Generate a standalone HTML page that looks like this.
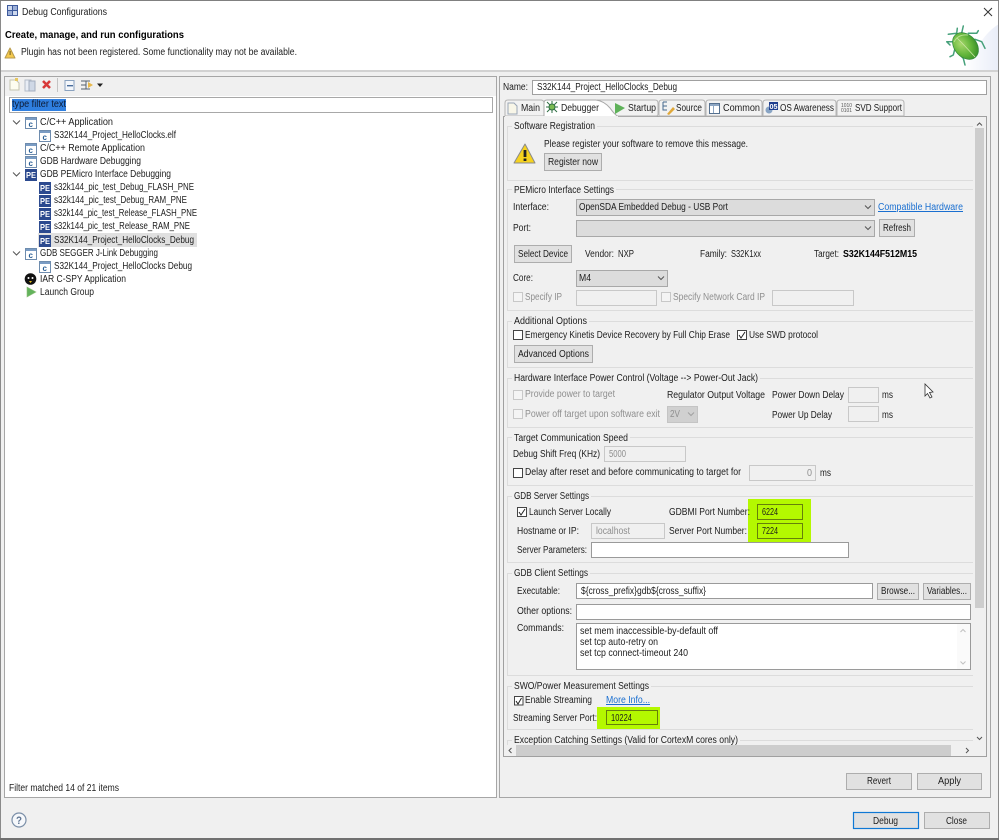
<!DOCTYPE html>
<html><head><meta charset="utf-8"><title>Debug Configurations</title>
<style>
html,body{margin:0;padding:0;background:#f0f0f0;width:999px;height:840px;overflow:hidden}
svg{display:block;filter:blur(.3px)}
text{font-family:"Liberation Sans",sans-serif;font-size:10px;fill:#1c1c1c;white-space:pre;transform:translateY(-1px)}
.g text,text.g{fill:#8f8f8f}
.b{fill:#e1e1e1;stroke:#adadad}
.c{fill:#dcdcdc;stroke:#a8a8a8}
.i{fill:#f0f0f0;stroke:#c8c8c8}
.w{fill:#fff;stroke:#9a9a9a}
.l{fill:none;stroke:#dcdcdc}
.k{fill:#fff;stroke:#444}
.kd{fill:#f4f4f4;stroke:#c8c8c8}
.y{fill:#b4f800;stroke:none}
.yi{fill:#b4f800;stroke:#66800a}
.a{fill:none;stroke:#555;stroke-width:1}
text.u{fill:#1a6fd0;text-decoration:underline}
</style></head><body>
<svg width="999" height="840" viewBox="0 0 999 840" xmlns="http://www.w3.org/2000/svg" style="shape-rendering:auto">
<defs>
<linearGradient id="hd" x1="0" y1="0" x2="1" y2="0"><stop offset="0" stop-color="#fff"/><stop offset="1" stop-color="#e9edf8"/></linearGradient>
<radialGradient id="bug" cx="0.4" cy="0.35" r="0.75"><stop offset="0" stop-color="#a8d86c"/><stop offset="0.55" stop-color="#62b53a"/><stop offset="1" stop-color="#2f8426"/></radialGradient>
<clipPath id="cl"><rect x="505" y="117" width="470" height="628"/></clipPath>
</defs>

<!-- window -->
<rect x="0" y="0" width="999" height="840" fill="#f0f0f0"/>
<rect x="1" y="1" width="997" height="69" fill="#fff"/>
<path d="M999 24 C985 32 975 50 964 70 L999 70Z" fill="url(#hd)"/>
<rect x="1" y="70" width="997" height="2" fill="#d2d2d2"/>
<path d="M0.5 0V838M998.5 0V838" stroke="#8a8a8a" fill="none"/>
<rect x="0" y="0" width="999" height="1" fill="#808080"/>
<rect x="0" y="838" width="999" height="2" fill="#707070"/>

<!-- title bar -->
<rect x="7" y="5" width="11" height="11" fill="#3d5a9c"/>
<rect x="8" y="6" width="4" height="4" fill="#cdd8ee"/><rect x="13" y="6" width="4" height="4" fill="#9db0d8"/><rect x="8" y="11" width="4" height="4" fill="#9db0d8"/><rect x="13" y="11" width="4" height="4" fill="#cdd8ee"/>
<text x="22" y="16" textLength="85" lengthAdjust="spacingAndGlyphs">Debug Configurations</text>
<path d="M984 8L992 16M992 8L984 16" stroke="#333" stroke-width="1" fill="none"/>

<text x="5" y="39" textLength="179" lengthAdjust="spacingAndGlyphs" style="font-weight:bold;font-size:10.5px;fill:#000">Create, manage, and run configurations</text>
<path d="M10 48L15 58H5Z" fill="#f4c94e" stroke="#b79a4c" stroke-linejoin="round"/><rect x="9.6" y="51" width="1" height="4" fill="#6b5a20"/>
<text x="21" y="56" textLength="276" lengthAdjust="spacingAndGlyphs">Plugin has not been registered. Some functionality may not be available.</text>

<!-- bug logo -->
<g fill="none" stroke="#45a07a" stroke-width="1.5" stroke-linejoin="round" stroke-linecap="round">
<path d="M948.300 34.300L956.700 33.300L957.300 28.300"/><path d="M961.700 33L963.300 26"/><path d="M968.300 33.300L976.700 33.300L978.300 30.700"/><path d="M975 39.300L981.700 41.700L985 48.300"/>
<path d="M955 41.700L946.700 41.700L950 45"/><path d="M955 48.300L953.300 55L950 56.700"/><path d="M960 55L963.300 58.300L965 65"/>
</g>
<g transform="rotate(-42 965.500 46)"><ellipse cx="965.500" cy="46" rx="11" ry="15" fill="url(#bug)" stroke="#2f8a3c" stroke-width=".7"/></g>
<path d="M957 38Q965 46 975 57" stroke="#cfe8a8" stroke-width=".8" fill="none"/>
<path d="M954 42Q958 34 968 35" stroke="#b8e090" stroke-width="1" fill="none"/>

<!-- left panel -->
<rect x="4.5" y="76.5" width="492" height="721" fill="#fff" stroke="#a6a6a6"/>
<rect x="5" y="77" width="491" height="19" fill="#f0f0f0"/>
<path d="M10 80H16L19 83V90H10Z" fill="#fdfdf0" stroke="#c4c4b0"/><rect x="15" y="78" width="3" height="3" fill="#e8c860"/>
<path d="M25 80H31V91H25Z" fill="#e8edf5" stroke="#b5bdc9"/><path d="M29 81H35V91H29Z" fill="#cfd8e6" stroke="#a3aebf"/>
<path d="M43 81L50 88M50 81L43 88" stroke="#d83a3a" stroke-width="2.6" fill="none"/>
<rect x="57" y="78" width="1" height="14" fill="#c4c4c4"/>
<rect x="65" y="80.5" width="9" height="10" fill="#f4f7fb" stroke="#8aa2bf"/><rect x="67" y="85" width="6" height="1.4" fill="#4a6d9c"/>
<path d="M81 81H90M81 85H86M81 89H90M86 81V89" stroke="#55606e" fill="none"/><path d="M88 82L93 85L88 88Z" fill="#e7b84a"/>
<path d="M97 83.5H103L100 87Z" fill="#222"/>
<rect x="9.5" y="97.5" width="483" height="15" fill="#fff" stroke="#a8a8a8"/>
<rect x="12" y="99" width="54" height="12" fill="#2f7fe0"/>
<text x="12" y="108" textLength="54" lengthAdjust="spacingAndGlyphs" style="fill:#0d1a33">type filter text</text>

<!-- tree -->
<rect x="38" y="233" width="159" height="14" fill="#e0e0e0"/>
<g fill="none" stroke="#555"><path d="M13 120.5L16.5 124L20 120.5"/><path d="M13 172.5L16.5 176L20 172.5"/><path d="M13 251.5L16.5 255L20 251.5"/></g>

<g><rect x="25.5" y="117.5" width="11" height="11" fill="#fff" stroke="#6e8cae"/><rect x="26" y="118" width="10" height="2" fill="#7a9cc4"/><text x="28.5" y="128" style="font-size:8px;fill:#2a5f96;font-weight:bold">c</text></g>
<g><rect x="39.5" y="130.5" width="11" height="11" fill="#fff" stroke="#6e8cae"/><rect x="40" y="131" width="10" height="2" fill="#7a9cc4"/><text x="42.5" y="141" style="font-size:8px;fill:#2a5f96;font-weight:bold">c</text></g>
<g><rect x="25.5" y="143.5" width="11" height="11" fill="#fff" stroke="#6e8cae"/><rect x="26" y="144" width="10" height="2" fill="#7a9cc4"/><text x="28.5" y="154" style="font-size:8px;fill:#2a5f96;font-weight:bold">c</text></g>
<g><rect x="25.5" y="156.5" width="11" height="11" fill="#fff" stroke="#6e8cae"/><rect x="26" y="157" width="10" height="2" fill="#7a9cc4"/><text x="28.5" y="167" style="font-size:8px;fill:#2a5f96;font-weight:bold">c</text></g>
<g><rect x="25.5" y="248.5" width="11" height="11" fill="#fff" stroke="#6e8cae"/><rect x="26" y="249" width="10" height="2" fill="#7a9cc4"/><text x="28.5" y="259" style="font-size:8px;fill:#2a5f96;font-weight:bold">c</text></g>
<g><rect x="39.5" y="261.5" width="11" height="11" fill="#fff" stroke="#6e8cae"/><rect x="40" y="262" width="10" height="2" fill="#7a9cc4"/><text x="42.5" y="272" style="font-size:8px;fill:#2a5f96;font-weight:bold">c</text></g>

<g style="font-weight:bold">
<rect x="25" y="169" width="12" height="12" fill="#2c4a8f"/><text x="26" y="179" textLength="10" lengthAdjust="spacingAndGlyphs" style="font-size:8.5px;fill:#fff;font-weight:bold">PE</text>
<rect x="39" y="182" width="12" height="12" fill="#2c4a8f"/><text x="40" y="192" textLength="10" lengthAdjust="spacingAndGlyphs" style="font-size:8.5px;fill:#fff;font-weight:bold">PE</text>
<rect x="39" y="195" width="12" height="12" fill="#2c4a8f"/><text x="40" y="205" textLength="10" lengthAdjust="spacingAndGlyphs" style="font-size:8.5px;fill:#fff;font-weight:bold">PE</text>
<rect x="39" y="208" width="12" height="12" fill="#2c4a8f"/><text x="40" y="218" textLength="10" lengthAdjust="spacingAndGlyphs" style="font-size:8.5px;fill:#fff;font-weight:bold">PE</text>
<rect x="39" y="221" width="12" height="12" fill="#2c4a8f"/><text x="40" y="231" textLength="10" lengthAdjust="spacingAndGlyphs" style="font-size:8.5px;fill:#fff;font-weight:bold">PE</text>
<rect x="39" y="235" width="12" height="12" fill="#2c4a8f"/><text x="40" y="245" textLength="10" lengthAdjust="spacingAndGlyphs" style="font-size:8.5px;fill:#fff;font-weight:bold">PE</text>
</g>
<circle cx="30.5" cy="279" r="5.8" fill="#111"/><circle cx="28.5" cy="278" r="1" fill="#fff"/><circle cx="32.5" cy="278" r="1" fill="#fff"/><path d="M29 281H32L30.5 283Z" fill="#e8c020"/>
<path d="M27 287L36 292L27 297Z" fill="#63b35c" stroke="#8fbf7a" stroke-width=".6"/>

<text x="40" y="126" textLength="73" lengthAdjust="spacingAndGlyphs">C/C++ Application</text>
<text x="54" y="139" textLength="122" lengthAdjust="spacingAndGlyphs">S32K144_Project_HelloClocks.elf</text>
<text x="40" y="152" textLength="105" lengthAdjust="spacingAndGlyphs">C/C++ Remote Application</text>
<text x="40" y="165" textLength="101" lengthAdjust="spacingAndGlyphs">GDB Hardware Debugging</text>
<text x="40" y="178" textLength="131" lengthAdjust="spacingAndGlyphs">GDB PEMicro Interface Debugging</text>
<text x="54" y="191" textLength="140" lengthAdjust="spacingAndGlyphs">s32k144_pic_test_Debug_FLASH_PNE</text>
<text x="54" y="204" textLength="133" lengthAdjust="spacingAndGlyphs">s32k144_pic_test_Debug_RAM_PNE</text>
<text x="54" y="217" textLength="143" lengthAdjust="spacingAndGlyphs">s32k144_pic_test_Release_FLASH_PNE</text>
<text x="54" y="230" textLength="136" lengthAdjust="spacingAndGlyphs">s32k144_pic_test_Release_RAM_PNE</text>
<text x="54" y="244" textLength="140" lengthAdjust="spacingAndGlyphs">S32K144_Project_HelloClocks_Debug</text>
<text x="40" y="257" textLength="118" lengthAdjust="spacingAndGlyphs">GDB SEGGER J-Link Debugging</text>
<text x="54" y="270" textLength="138" lengthAdjust="spacingAndGlyphs">S32K144_Project_HelloClocks Debug</text>
<text x="40" y="283" textLength="86" lengthAdjust="spacingAndGlyphs">IAR C-SPY Application</text>
<text x="40" y="296" textLength="54" lengthAdjust="spacingAndGlyphs">Launch Group</text>
<text x="9" y="792" textLength="110" lengthAdjust="spacingAndGlyphs">Filter matched 14 of 21 items</text>

<!-- right panel -->
<rect x="499.5" y="76.5" width="491" height="721" fill="#f0f0f0" stroke="#a6a6a6"/>
<text x="503" y="91" textLength="25" lengthAdjust="spacingAndGlyphs">Name:</text>
<rect x="532.5" y="80.5" width="454" height="14" fill="#fff" stroke="#a0a0a0"/>
<text x="537" y="91" textLength="140" lengthAdjust="spacingAndGlyphs">S32K144_Project_HelloClocks_Debug</text>

<!-- tabs -->
<rect x="503.5" y="116.5" width="483" height="640" fill="#f0f0f0" stroke="#a0a0a0"/>
<path d="M505 116V103Q505 100 508 100H541Q543 100 544 102V116ZM616 116H656Q658 116 658 114V103Q658 100 655 100H597Q608 104 616 116ZM659 116V103Q659 100 662 100H702Q705 100 705 103V116ZM706 116V103Q706 100 709 100H759Q762 100 762 103V116ZM763 116V103Q763 100 766 100H833Q836 100 836 103V116ZM837 116V103Q837 100 840 100H901Q904 100 904 103V116Z" fill="#f2f2f2" stroke="#b4b4b4"/>
<path d="M503.5 116.5H544V103Q544 100 547 100H596Q604 101 610 108Q614 114 618 116.5" fill="#fff" stroke="#a8a8a8"/>
<rect x="505" y="116" width="113" height="2" fill="#f0f0f0"/>
<path d="M508 103H514L517 106V114H508Z" fill="#f8f6e8" stroke="#9aa6b6"/>
<path d="M547 102L557 112M557 102L547 112M546 107H558M552 101V113" stroke="#2f6f44" fill="none"/><circle cx="552" cy="107" r="3" fill="#7cbc52" stroke="#2f6f44"/>
<path d="M615 103L625 108L615 114Z" fill="#5fb25a"/>
<path d="M663 102V110H667M663 106H667M663 102H667" stroke="#47698f" fill="none"/><path d="M667 114L673 107L675 109L669 115Z" fill="#e0a83a"/>
<rect x="709.5" y="103.5" width="10" height="10" fill="#fff" stroke="#55708f"/><rect x="710" y="104" width="9" height="2" fill="#8ea7c4"/><path d="M713.5 106V113" stroke="#8ea7c4"/>
<circle cx="769" cy="110" r="3.500" fill="#88a4c4"/><rect x="769" y="102" width="9" height="8" fill="#1f3f8f"/><text x="769.500" y="110" textLength="8" lengthAdjust="spacingAndGlyphs" style="font-size:7px;fill:#fff;font-weight:bold">05</text>
<text x="841" y="108" textLength="11" lengthAdjust="spacingAndGlyphs" style="font-size:5px;fill:#555">1010</text><text x="841" y="113" textLength="11" lengthAdjust="spacingAndGlyphs" style="font-size:5px;fill:#555">0101</text>
<text x="521" y="112" textLength="19" lengthAdjust="spacingAndGlyphs">Main</text>
<text x="561" y="112" textLength="38" lengthAdjust="spacingAndGlyphs">Debugger</text>
<text x="628" y="112" textLength="28" lengthAdjust="spacingAndGlyphs">Startup</text>
<text x="676" y="112" textLength="26" lengthAdjust="spacingAndGlyphs">Source</text>
<text x="723" y="112" textLength="37" lengthAdjust="spacingAndGlyphs">Common</text>
<text x="780" y="112" textLength="54" lengthAdjust="spacingAndGlyphs">OS Awareness</text>
<text x="855" y="112" textLength="47" lengthAdjust="spacingAndGlyphs">SVD Support</text>

<!-- scrollable content -->
<g clip-path="url(#cl)">
<!-- group boxes -->
<path class="l" d="M973 126.5H507.5V180.5H973M973 189.5H507.5V310.5H973M973 321.5H507.5V367.5H973M973 378.5H507.5V427.5H973M973 437.5H507.5V485.5H973M973 496.5H507.5V562.5H973M973 573.5H507.5V675.5H973M973 686.5H507.5V729.5H973M973 740.5H507.5V760"/>
<rect x="512" y="121" width="85" height="9" fill="#f0f0f0"/><rect x="512" y="184" width="104" height="9" fill="#f0f0f0"/><rect x="512" y="316" width="77" height="9" fill="#f0f0f0"/><rect x="512" y="373" width="248" height="9" fill="#f0f0f0"/><rect x="512" y="432" width="118" height="9" fill="#f0f0f0"/><rect x="512" y="491" width="79" height="9" fill="#f0f0f0"/><rect x="512" y="568" width="78" height="9" fill="#f0f0f0"/><rect x="512" y="681" width="139" height="9" fill="#f0f0f0"/><rect x="512" y="735" width="228" height="9" fill="#f0f0f0"/>

<text x="514" y="130" textLength="81" lengthAdjust="spacingAndGlyphs">Software Registration</text>
<path d="M525 144L535 163H514Z" fill="#f6d21e" stroke="#8a8a8a" stroke-linejoin="round"/><rect x="523.6" y="150" width="2.8" height="7" fill="#222"/><rect x="523.6" y="158.5" width="2.8" height="2.5" fill="#222"/>
<text x="544" y="148" textLength="204" lengthAdjust="spacingAndGlyphs">Please register your software to remove this message.</text>
<rect class="b" x="544.5" y="153.5" width="57" height="17"/>
<text x="548" y="166" textLength="50" lengthAdjust="spacingAndGlyphs">Register now</text>

<text x="514" y="194" textLength="100" lengthAdjust="spacingAndGlyphs">PEMicro Interface Settings</text>
<text x="513" y="211" textLength="36" lengthAdjust="spacingAndGlyphs">Interface:</text>
<rect class="c" x="576.5" y="199.5" width="298" height="16"/>
<text x="579" y="211" textLength="149" lengthAdjust="spacingAndGlyphs">OpenSDA Embedded Debug - USB Port</text>
<path class="a" d="M865 205.5L868 208.5L871 205.5"/>
<text class="u" x="878" y="211" textLength="85" lengthAdjust="spacingAndGlyphs">Compatible Hardware</text>
<text x="513" y="232" textLength="18" lengthAdjust="spacingAndGlyphs">Port:</text>
<rect class="c" x="576.5" y="220.5" width="298" height="16"/>
<path class="a" d="M865 226.5L868 229.5L871 226.5"/>
<rect class="b" x="879.5" y="219.5" width="35" height="17"/>
<text x="883" y="232" textLength="28" lengthAdjust="spacingAndGlyphs">Refresh</text>
<rect class="b" x="514.5" y="245.5" width="57" height="17"/>
<text x="518" y="258" textLength="50" lengthAdjust="spacingAndGlyphs">Select Device</text>
<text x="585" y="258" textLength="29" lengthAdjust="spacingAndGlyphs">Vendor:</text>
<text x="618" y="258" textLength="16" lengthAdjust="spacingAndGlyphs">NXP</text>
<text x="700" y="258" textLength="27" lengthAdjust="spacingAndGlyphs">Family:</text>
<text x="731" y="258" textLength="30" lengthAdjust="spacingAndGlyphs">S32K1xx</text>
<text x="814" y="258" textLength="25" lengthAdjust="spacingAndGlyphs">Target:</text>
<text x="843" y="258" textLength="74" lengthAdjust="spacingAndGlyphs" style="font-weight:bold;fill:#000">S32K144F512M15</text>
<text x="513" y="282" textLength="20" lengthAdjust="spacingAndGlyphs">Core:</text>
<rect class="c" x="576.5" y="270.5" width="91" height="16"/>
<text x="579" y="282" textLength="12" lengthAdjust="spacingAndGlyphs">M4</text>
<path class="a" d="M658 276.5L661 279.5L664 276.5"/>
<rect class="kd" x="513.5" y="292.5" width="9" height="9"/>
<text class="g" x="525" y="301" textLength="37" lengthAdjust="spacingAndGlyphs">Specify IP</text>
<rect class="i" x="576.5" y="290.5" width="80" height="15"/>
<rect class="kd" x="661.5" y="292.5" width="9" height="9"/>
<text class="g" x="673" y="301" textLength="92" lengthAdjust="spacingAndGlyphs">Specify Network Card IP</text>
<rect class="i" x="772.5" y="290.5" width="81" height="15"/>

<text x="514" y="325" textLength="73" lengthAdjust="spacingAndGlyphs">Additional Options</text>
<rect class="k" x="513.5" y="330.5" width="9" height="9"/>
<text x="525" y="339" textLength="205" lengthAdjust="spacingAndGlyphs">Emergency Kinetis Device Recovery by Full Chip Erase</text>
<rect class="k" x="737.5" y="330.5" width="9" height="9"/><path d="M739 335L741 338L745 332" stroke="#222" fill="none"/>
<text x="749" y="339" textLength="69" lengthAdjust="spacingAndGlyphs">Use SWD protocol</text>
<rect class="b" x="514.5" y="345.5" width="78" height="17"/>
<text x="518" y="358" textLength="71" lengthAdjust="spacingAndGlyphs">Advanced Options</text>

<text x="514" y="382" textLength="244" lengthAdjust="spacingAndGlyphs">Hardware Interface Power Control (Voltage --&gt; Power-Out Jack)</text>
<rect class="kd" x="513.5" y="390.5" width="9" height="9"/>
<text class="g" x="525" y="398" textLength="90" lengthAdjust="spacingAndGlyphs">Provide power to target</text>
<text x="667" y="399" textLength="98" lengthAdjust="spacingAndGlyphs">Regulator Output Voltage</text>
<text x="772" y="399" textLength="72" lengthAdjust="spacingAndGlyphs">Power Down Delay</text>
<rect class="i" x="848.5" y="387.5" width="30" height="15"/>
<text x="882" y="399" textLength="11" lengthAdjust="spacingAndGlyphs">ms</text>
<rect class="kd" x="513.5" y="409.5" width="9" height="9"/>
<text class="g" x="525" y="418" textLength="135" lengthAdjust="spacingAndGlyphs">Power off target upon software exit</text>
<rect x="667.5" y="406.5" width="30" height="16" fill="#d0d0d0" stroke="#c4c4c4"/>
<text class="g" x="670" y="418" textLength="10" lengthAdjust="spacingAndGlyphs">2V</text>
<path d="M688 412.5L691 415.5L694 412.5" fill="none" stroke="#a0a0a0"/>
<text x="772" y="419" textLength="60" lengthAdjust="spacingAndGlyphs">Power Up Delay</text>
<rect class="i" x="848.5" y="406.5" width="30" height="15"/>
<text x="882" y="419" textLength="11" lengthAdjust="spacingAndGlyphs">ms</text>
<path d="M925 384V396L927.500 393.500L930 398L932 397L929.500 392.500L933 392Z" fill="#fff" stroke="#333" stroke-width=".8"/>

<text x="514" y="442" textLength="114" lengthAdjust="spacingAndGlyphs">Target Communication Speed</text>
<text x="513" y="458" textLength="87" lengthAdjust="spacingAndGlyphs">Debug Shift Freq (KHz)</text>
<rect class="i" x="604.5" y="446.5" width="81" height="15"/>
<text class="g" x="609" y="458" textLength="17" lengthAdjust="spacingAndGlyphs">5000</text>
<rect class="k" x="513.5" y="468.500" width="9" height="9"/>
<text x="525" y="476" textLength="216" lengthAdjust="spacingAndGlyphs">Delay after reset and before communicating to target for</text>
<rect class="i" x="749.5" y="465.5" width="66" height="15"/>
<text class="g" x="807" y="477" textLength="5" lengthAdjust="spacingAndGlyphs">0</text>
<text x="820" y="477" textLength="11" lengthAdjust="spacingAndGlyphs">ms</text>

<text x="514" y="500" textLength="75" lengthAdjust="spacingAndGlyphs">GDB Server Settings</text>
<rect class="y" x="748" y="499" width="63" height="44"/>
<rect class="k" x="517.5" y="507.5" width="9" height="9"/><path d="M519 512L521 515L525 509" stroke="#222" fill="none"/>
<text x="529" y="516" textLength="82" lengthAdjust="spacingAndGlyphs">Launch Server Locally</text>
<text x="669" y="516" textLength="81" lengthAdjust="spacingAndGlyphs">GDBMI Port Number:</text>
<rect class="yi" x="757.5" y="504.5" width="45" height="15"/>
<text x="762" y="516" textLength="16" lengthAdjust="spacingAndGlyphs">6224</text>
<text x="517" y="535" textLength="62" lengthAdjust="spacingAndGlyphs">Hostname or IP:</text>
<rect class="i" x="591.5" y="523.5" width="73" height="15"/>
<text class="g" x="596" y="535" textLength="34" lengthAdjust="spacingAndGlyphs">localhost</text>
<text x="669" y="535" textLength="78" lengthAdjust="spacingAndGlyphs">Server Port Number:</text>
<rect class="yi" x="757.5" y="523.5" width="45" height="15"/>
<text x="762" y="535" textLength="16" lengthAdjust="spacingAndGlyphs">7224</text>
<text x="517" y="554" textLength="70" lengthAdjust="spacingAndGlyphs">Server Parameters:</text>
<rect class="w" x="591.5" y="542.5" width="257" height="15"/>

<text x="514" y="577" textLength="74" lengthAdjust="spacingAndGlyphs">GDB Client Settings</text>
<text x="517" y="595" textLength="43" lengthAdjust="spacingAndGlyphs">Executable:</text>
<rect class="w" x="576.5" y="583.5" width="296" height="15"/>
<text x="581" y="595" textLength="125" lengthAdjust="spacingAndGlyphs">${cross_prefix}gdb${cross_suffix}</text>
<rect class="b" x="877.5" y="583.5" width="41" height="16"/>
<text x="881" y="595" textLength="34" lengthAdjust="spacingAndGlyphs">Browse...</text>
<rect class="b" x="923.5" y="583.5" width="47" height="16"/>
<text x="927" y="595" textLength="40" lengthAdjust="spacingAndGlyphs">Variables...</text>
<text x="517" y="615" textLength="55" lengthAdjust="spacingAndGlyphs">Other options:</text>
<rect class="w" x="576.5" y="604.5" width="394" height="15"/>
<text x="517" y="632" textLength="47" lengthAdjust="spacingAndGlyphs">Commands:</text>
<rect class="w" x="576.5" y="623.5" width="394" height="46"/>
<rect x="957" y="624" width="13" height="45" fill="#fafafa"/>
<path d="M960.500 632L963 629.500L965.500 632M960.500 661.500L963 664L965.500 661.500" fill="none" stroke="#c0c0c0"/>
<text x="580" y="635" textLength="138" lengthAdjust="spacingAndGlyphs">set mem inaccessible-by-default off</text>
<text x="580" y="646" textLength="78" lengthAdjust="spacingAndGlyphs">set tcp auto-retry on</text>
<text x="580" y="657" textLength="108" lengthAdjust="spacingAndGlyphs">set tcp connect-timeout 240</text>

<text x="514" y="690" textLength="135" lengthAdjust="spacingAndGlyphs">SWO/Power Measurement Settings</text>
<rect class="k" x="514.5" y="696.5" width="8.500" height="8.500"/><path d="M516 701L518 704L521.500 698" stroke="#222" fill="none"/>
<text x="525" y="704" textLength="67" lengthAdjust="spacingAndGlyphs">Enable Streaming</text>
<text class="u" x="606" y="704" textLength="44" lengthAdjust="spacingAndGlyphs">More Info...</text>
<text x="513" y="722" textLength="84" lengthAdjust="spacingAndGlyphs">Streaming Server Port:</text>
<rect class="y" x="597" y="707" width="63" height="22"/>
<rect class="yi" x="606.5" y="710.5" width="51" height="14"/>
<text x="611" y="722" textLength="21" lengthAdjust="spacingAndGlyphs">10224</text>
<text x="514" y="744" textLength="224" lengthAdjust="spacingAndGlyphs">Exception Catching Settings (Valid for CortexM cores only)</text>
</g>

<!-- scrollbars -->
<rect x="975" y="117" width="11" height="628" fill="#f0f0f0"/>
<rect x="975" y="128" width="9" height="480" fill="#cdcdcd"/>
<path d="M977 125.500L979.500 123L982 125.500M977 737L979.500 739.500L982 737" fill="none" stroke="#555"/>
<rect x="504" y="745" width="482" height="11" fill="#f0f0f0"/>
<rect x="516" y="745" width="435" height="11" fill="#cdcdcd"/>
<path d="M511.500 748L509 750.500L511.500 753M966 748L968.500 750.500L966 753" fill="none" stroke="#555"/>

<!-- bottom buttons -->
<rect class="b" x="846.5" y="773.5" width="65" height="16"/>
<text x="867" y="785" textLength="24" lengthAdjust="spacingAndGlyphs">Revert</text>
<rect class="b" x="917.5" y="773.5" width="64" height="16"/>
<text x="938" y="785" textLength="23" lengthAdjust="spacingAndGlyphs">Apply</text>
<rect x="853.500" y="812.500" width="65" height="16" fill="#e1e1e1" stroke="#0f78d4" stroke-width="1.2"/>
<text x="873" y="825" textLength="25" lengthAdjust="spacingAndGlyphs">Debug</text>
<rect class="b" x="924.5" y="812.5" width="65" height="16"/>
<text x="946" y="825" textLength="21" lengthAdjust="spacingAndGlyphs">Close</text>

<circle cx="19" cy="820" r="7" fill="#f6f8fb" stroke="#7b8fa8" stroke-width="1.2"/>
<text x="16" y="825" textLength="6" lengthAdjust="spacingAndGlyphs" style="font-size:11px;font-weight:bold;fill:#5f7592">?</text>
</svg>
</body></html>
